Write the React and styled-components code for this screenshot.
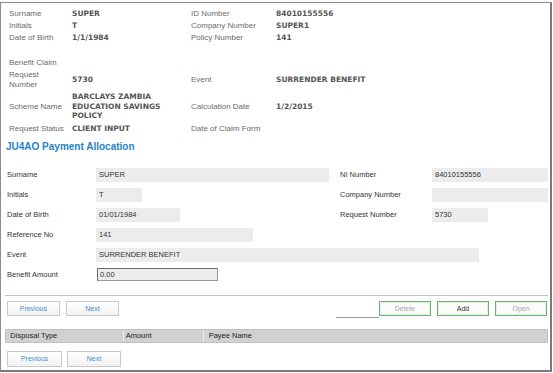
import React from "react";
import styled, { createGlobalStyle } from "styled-components";

const Global = createGlobalStyle`
  html, body { margin: 0; padding: 0; background: #fff; }
  body { font-family: "Liberation Sans", Arial, sans-serif; }
  * { box-sizing: border-box; }
`;

const Frame = styled.div`
  margin-top: 2px;
  width: 552px;
  height: 370px;
  border-top: 1px solid #8c8c8c;
  border-left: 1px solid #8c8c8c;
  border-right: 2px solid #7a7a7a;
  border-bottom: 2px solid #7a7a7a;
  display: flex;
  flex-direction: column;
  overflow: hidden;
`;

const Summary = styled.div`
  display: grid;
  grid-template-columns: 63px 119px 85px 1fr;
  grid-template-rows: 12px 12px 12.5px 12.5px 12.5px 22px 31px 13px;
  padding: 4.3px 0 0 8px;
  align-items: center;
`;

const SLabel = styled.div`
  font-family: "Liberation Sans", Arial, sans-serif;
  font-size: 8px;
  line-height: 9.4px;
  color: #6a6a6a;
  white-space: nowrap;
`;

const SValue = styled.div`
  font-family: "DejaVu Sans", Verdana, sans-serif;
  font-weight: bold;
  font-size: 7.5px;
  line-height: 9.3px;
  color: #555;
  white-space: nowrap;
`;

const Heading = styled.div`
  margin-top: 5.5px;
  padding-left: 5px;
  font-family: "Liberation Sans", Arial, sans-serif;
  font-weight: bold;
  font-size: 10px;
  line-height: 14px;
  color: #1f84c6;
`;

const Form = styled.div`
  margin-top: 10.7px;
  margin-left: 6px;
  display: grid;
  grid-template-columns: 89px 244px 92px 116px;
  grid-auto-rows: 20px;
  align-items: center;
`;

const FLabel = styled.div`
  font-family: "Liberation Sans", Arial, sans-serif;
  font-size: 7.5px;
  color: #333;
  white-space: nowrap;
`;

const Field = styled.div`
  width: ${(p) => p.$w}px;
  height: ${(p) => (p.$boxed ? 13 : 14.5)}px;
  grid-column: ${(p) => p.$span || "auto"};
  background: #ececec;
  padding-left: ${(p) => (p.$boxed ? 2 : 3)}px;
  margin-left: ${(p) => (p.$boxed ? 1 : 0)}px;
  display: flex;
  align-items: center;
  font-family: "Liberation Sans", Arial, sans-serif;
  font-size: 7.5px;
  color: #333;
  border: ${(p) => (p.$boxed ? "1px solid #9a9a9a" : "none")};
  border-top-color: ${(p) => (p.$boxed ? "#6e6e6e" : "transparent")};
  border-left-color: ${(p) => (p.$boxed ? "#6e6e6e" : "transparent")};
  white-space: nowrap;
`;

const Empty = styled.div``;

const Separator = styled.div`
  margin: 10px 0 0 4px;
  width: 543px;
  height: 1px;
  background: #c4c4c4;
`;

const ButtonBar = styled.div`
  margin: ${(p) => p.$mt}px 0 0 ${(p) => p.$ml}px;
  display: flex;
  align-items: flex-start;
`;

const Group = styled.div`
  display: flex;
  gap: ${(p) => p.$gap}px;
  margin-left: ${(p) => p.$ml || 0}px;
  align-items: flex-end;
`;

const Btn = styled.button`
  width: ${(p) => p.$w}px;
  height: ${(p) => p.$h}px;
  padding: 0;
  border: 1px solid #c9c9c9;
  background: linear-gradient(#ffffff, #f2f2f2);
  font-family: "Liberation Sans", Arial, sans-serif;
  font-size: 7px;
  color: #3d8fd0;
  cursor: pointer;
`;

const GreenBtn = styled.button`
  width: 52.5px;
  height: 15.5px;
  padding: 0;
  border: 1px solid #6db36d;
  box-shadow: inset 0 0 0 1px #e3f0e3;
  background: #fbfbfb;
  font-family: "Liberation Sans", Arial, sans-serif;
  font-size: 7px;
  color: ${(p) => (p.$disabled ? "#a8a8a8" : "#333")};
`;

const Underline = styled.div`
  width: 43px;
  height: 1px;
  background: #9a9a9a;
  margin-bottom: -1.5px;
  margin-right: -5.6px;
`;

const Table = styled.div`
  margin: 13px 0 0 4px;
  width: 543px;
  height: 13.5px;
  display: grid;
  grid-template-columns: 116.7px 80px 1fr;
  background: #d1d1d1;
  border: 1px solid #c0c0c0;
`;

const Th = styled.div`
  display: flex;
  align-items: center;
  padding-left: ${(p) => p.$pl}px;
  font-family: "Liberation Sans", Arial, sans-serif;
  font-size: 7.5px;
  color: #222;
  border-left: ${(p) => (p.$first ? "none" : "1px solid #ececec")};
  white-space: nowrap;
`;

const summaryRows = [
  ["Surname", "SUPER", "ID Number", "84010155556"],
  ["Initials", "T", "Company Number", "SUPER1"],
  ["Date of Birth", "1/1/1984", "Policy Number", "141"],
  ["", "", "", ""],
  ["Benefit Claim", "", "", ""],
  [["Request", "Number"], "5730", "Event", "SURRENDER BENEFIT"],
  ["Scheme Name", ["BARCLAYS ZAMBIA", "EDUCATION SAVINGS", "POLICY"], "Calculation Date", "1/2/2015"],
  ["Request Status", "CLIENT INPUT", "Date of Claim Form", ""],
];

const lines = (v) =>
  Array.isArray(v)
    ? v.map((t, i) => (
        <React.Fragment key={i}>
          {i > 0 && <br />}
          {t}
        </React.Fragment>
      ))
    : v;

export default function App() {
  return (
    <>
      <Global />
      <Frame>
        <Summary>
          {summaryRows.map((r, i) => (
            <React.Fragment key={i}>
              <SLabel>{lines(r[0])}</SLabel>
              <SValue>{lines(r[1])}</SValue>
              <SLabel>{r[2]}</SLabel>
              <SValue>{r[3]}</SValue>
            </React.Fragment>
          ))}
        </Summary>
        <Heading>JU4AO Payment Allocation</Heading>
        <Form>
          <FLabel>Surname</FLabel>
          <Field $w={233}>SUPER</Field>
          <FLabel>NI Number</FLabel>
          <Field $w={116}>84010155556</Field>

          <FLabel>Initials</FLabel>
          <Field $w={46}>T</Field>
          <FLabel>Company Number</FLabel>
          <Field $w={116}></Field>

          <FLabel>Date of Birth</FLabel>
          <Field $w={84}>01/01/1984</Field>
          <FLabel>Request Number</FLabel>
          <Field $w={56}>5730</Field>

          <FLabel>Reference No</FLabel>
          <Field $w={157}>141</Field>
          <Empty />
          <Empty />

          <FLabel>Event</FLabel>
          <Field $w={383} $span="2 / span 3">SURRENDER BENEFIT</Field>

          <FLabel>Benefit Amount</FLabel>
          <Field $w={121} $boxed>0.00</Field>
        </Form>
        <Separator />
        <ButtonBar $mt={4.7} $ml={5.7}>
          <Group $gap={5.7}>
            <Btn $w={53.3} $h={15.5}>Previous</Btn>
            <Btn $w={53.6} $h={15.5}>Next</Btn>
          </Group>
          <Group $gap={5.6} $ml={216.4}>
            <Underline />
            <GreenBtn $disabled>Delete</GreenBtn>
            <GreenBtn>Add</GreenBtn>
            <GreenBtn $disabled>Open</GreenBtn>
          </Group>
        </ButtonBar>
        <Table>
          <Th $first $pl={4.3}>Disposal Type</Th>
          <Th $pl={2}>Amount</Th>
          <Th $pl={5}>Payee Name</Th>
        </Table>
        <ButtonBar $mt={8} $ml={6.3}>
          <Group $gap={5.6}>
            <Btn $w={54.4} $h={16.6}>Previous</Btn>
            <Btn $w={53.4} $h={16.6}>Next</Btn>
          </Group>
        </ButtonBar>
      </Frame>
    </>
  );
}
